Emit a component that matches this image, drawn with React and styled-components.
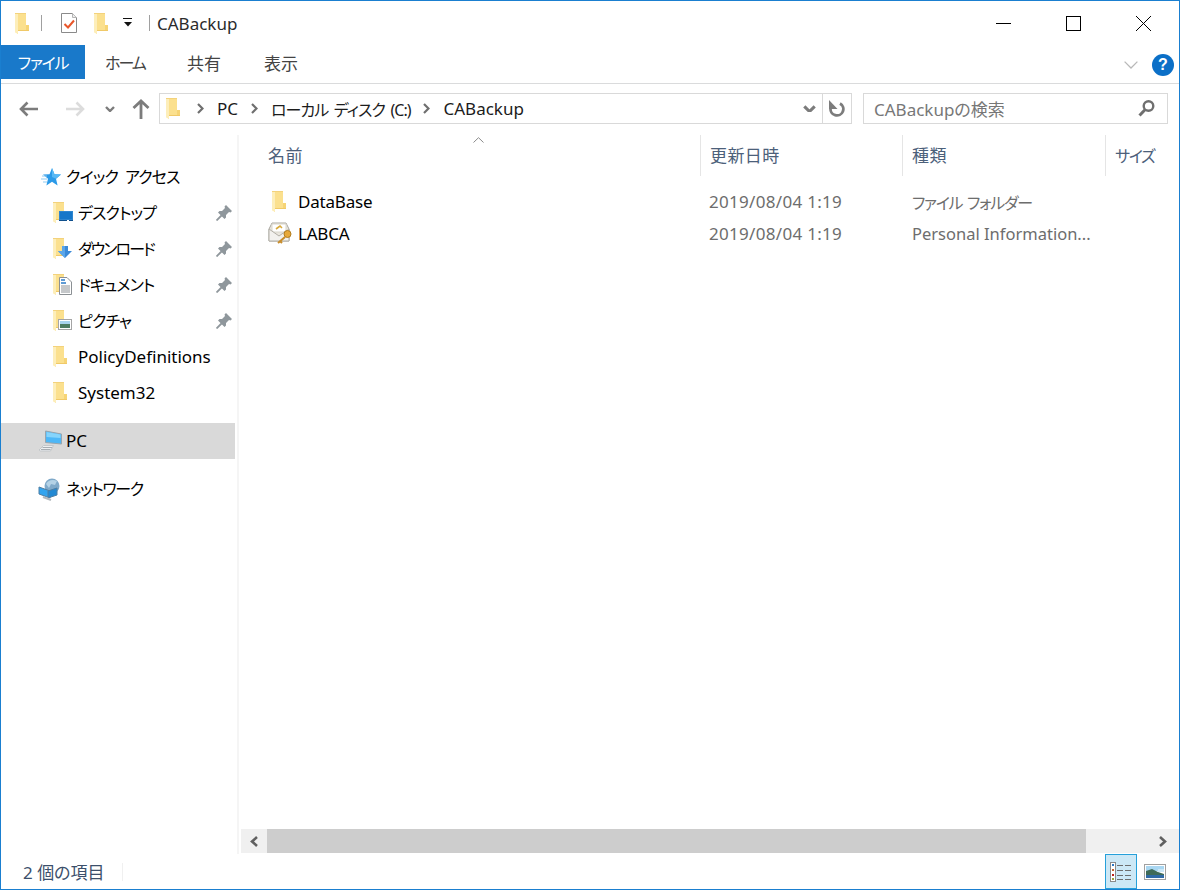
import styled, { createGlobalStyle } from 'styled-components'

const Global = createGlobalStyle`
  html, body { margin: 0; padding: 0; background: #fff; }
  body {
    font-family: "Noto Sans", "Noto Sans CJK JP", sans-serif;
    font-size: 16px;
    font-feature-settings: "palt";
  }
  * { box-sizing: border-box; }
  svg { display: block; flex: none; }
`

const Window = styled.div`
  width: 1180px;
  height: 890px;
  border: 1px solid #1a7fd0;
  display: flex;
  flex-direction: column;
  overflow: hidden;
  background: #fff;
`

const TitleBar = styled.div`
  height: 44px;
  flex: none;
  display: flex;
  align-items: center;
  padding-left: 13px;
`

const Divider = styled.span`
  width: 1px;
  height: 16px;
  background: #a0a0a0;
  margin-left: ${p => p.$left}px;
`

const Slot = styled.span`
  display: block;
  flex: none;
  margin-left: ${p => p.$left}px;
`

const Title = styled.span`
  color: #2b2b2b;
  margin-left: 7px;
  margin-right: auto;
  font-size: 17px;
`

const WinButton = styled.div`
  width: 70px;
  height: 44px;
  display: flex;
  align-items: center;
  justify-content: center;
`

const WinButtons = styled.div`
  display: flex;
  margin-right: 1px;
`

const Ribbon = styled.div`
  height: 39px;
  flex: none;
  display: flex;
  align-items: flex-start;
  border-bottom: 1px solid #dadbdc;
  padding-right: 5px;
`

const Tab = styled.div`
  height: 34px;
  width: ${p => p.$width}px;
  display: flex;
  align-items: center;
  justify-content: center;
  font-size: ${p => p.$size || 16}px;
  letter-spacing: ${p => p.$tight || 0}px;
  color: ${p => (p.$active ? '#fff' : '#444')};
  background: ${p => (p.$active ? '#1979ca' : 'transparent')};
`

const RibbonEnd = styled.div`
  margin-left: auto;
  height: 38px;
  display: flex;
  align-items: center;
  gap: 13px;
  padding-top: 2px;
`

const Help = styled.div`
  width: 22px;
  height: 22px;
  border-radius: 50%;
  background: #0b6fc7;
  color: #fff;
  font: bold 16px/22px "Liberation Sans", sans-serif;
  text-align: center;
`

const AddressRow = styled.div`
  height: 51px;
  flex: none;
  display: flex;
  align-items: flex-start;
  padding-top: 9px;
`

const NavButtons = styled.div`
  width: 158px;
  height: 31px;
  flex: none;
  display: flex;
  align-items: center;
  padding-left: 18px;
`

const Breadcrumb = styled.div`
  width: 693px;
  height: 31px;
  flex: none;
  border: 1px solid #d9d9d9;
  display: flex;
  align-items: center;
  padding-left: 5px;
  color: #1c1c1c;
`

const CrumbText = styled.span`
  margin: 0 13px;
  white-space: nowrap;
  font-size: ${p => p.$size || 17}px;
  letter-spacing: ${p => p.$tight || 0}px;
  word-spacing: ${p => (p.$tight ? 2.5 : 0)}px;
`

const BreadcrumbEnd = styled.div`
  margin-left: auto;
  height: 100%;
  display: flex;
  align-items: center;
`

const RefreshCell = styled.div`
  width: 29px;
  height: 100%;
  margin-left: 6px;
  border-left: 1px solid #d9d9d9;
  display: flex;
  align-items: center;
  justify-content: center;
`

const SearchBox = styled.div`
  width: 305px;
  height: 31px;
  margin-left: 11px;
  flex: none;
  border: 1px solid #d9d9d9;
  display: flex;
  align-items: center;
  justify-content: space-between;
  padding: 0 12px 0 10px;
  color: #777;
  font-size: 17px;
`

const Body = styled.div`
  flex: 1;
  min-height: 0;
  display: flex;
`

const Sidebar = styled.nav`
  width: 238px;
  flex: none;
  padding-top: 24px;
  border-right: 2px solid #f5f5f5;
`

const NavGroup = styled.div`
  margin-bottom: 12px;
`

const NavRow = styled.div`
  width: 234px;
  height: 36px;
  display: flex;
  align-items: center;
  padding-left: ${p => (p.$child ? 51 : 37)}px;
  background: ${p => (p.$selected ? '#d9d9d9' : 'transparent')};
  color: #000;
  white-space: nowrap;
`

const NavLabel = styled.span`
  margin-left: ${p => p.$left}px;
  margin-right: auto;
  font-size: ${p => (p.$latin ? 17 : 16)}px;
  letter-spacing: ${p => (p.$latin ? 0 : p.$tight ?? -0.9)}px;
  word-spacing: 4px;
  padding-bottom: ${p => (p.$latin ? 1 : 2)}px;
`

const Pin = styled.span`
  margin-right: 3px;
`

const Main = styled.main`
  flex: 1;
  min-width: 0;
  margin-left: 2px;
  display: flex;
  flex-direction: column;
`

const Columns = styled.div`
  display: grid;
  grid-template-columns: 459px 202px 203px 1fr;
`

const Header = styled(Columns)`
  position: relative;
  height: 41px;
  flex: none;
`

const HeaderCell = styled.div`
  display: flex;
  align-items: center;
  padding-left: ${p => (p.$first ? 27 : 9)}px;
  padding-bottom: 2px;
  border-left: ${p => (p.$first ? 'none' : '1px solid #e5e5e5')};
  color: #4c607a;
  font-size: ${p => (p.$kana ? 16 : 17)}px;
  letter-spacing: ${p => (p.$kana ? -1.3 : 0.4)}px;
  white-space: nowrap;
  overflow: hidden;
`

const SortCaret = styled.span`
  position: absolute;
  left: 232px;
  top: 2px;
`

const FileList = styled.div`
  flex: 1;
  padding-top: 9px;
`

const FileRow = styled(Columns)`
  height: 32px;
  align-items: center;
`

const NameCell = styled.div`
  display: flex;
  align-items: center;
  padding-left: ${p => p.$inset}px;
  color: #000;
  gap: ${p => p.$gap}px;
  font-size: 17px;
  letter-spacing: -0.2px;
`

const NameText = styled.span`
  padding-top: 1px;
`

const MetaCell = styled.div`
  color: #6d6d6d;
  padding-top: 1px;
  padding-left: ${p => p.$inset}px;
  font-size: ${p => p.$size}px;
  letter-spacing: ${p => p.$spacing}px;
  word-spacing: ${p => (p.$spacing < 0 ? 2 : 0)}px;
  white-space: nowrap;
`

const Scrollbar = styled.div`
  height: 24px;
  flex: none;
  margin-bottom: 1px;
  display: flex;
  align-items: center;
  background: #f0f0f0;
`

const ScrollArrow = styled.div`
  width: ${p => p.$width}px;
  height: 100%;
  flex: none;
  display: flex;
  align-items: center;
  justify-content: center;
`

const ScrollThumb = styled.div`
  width: 819px;
  height: 100%;
  background: #cdcdcd;
  margin-right: auto;
`

const StatusBar = styled.div`
  height: 35px;
  flex: none;
  display: flex;
  align-items: center;
  padding-left: 22px;
  color: #3c4f6b;
  font-size: 17px;
`

const StatusSep = styled.span`
  width: 1px;
  height: 18px;
  background: #f0f0f0;
  margin-left: 17px;
  margin-right: auto;
`

const ViewButton = styled.div`
  width: ${p => p.$width}px;
  height: 35px;
  display: flex;
  align-items: center;
  justify-content: center;
  padding-right: ${p => p.$trail || 0}px;
  background: ${p => (p.$active ? '#cce8f6' : 'transparent')};
  border: 1px solid ${p => (p.$active ? '#26a0da' : 'transparent')};
`

const FolderShape = () => (
  <>
    <path d="M1 0H12V18H4V21L1 19Z" fill="#fbe08e" />
    <path d="M12 12H15V18H12Z" fill="#f6d476" />
    <path d="M4 17H15V18H4Z" fill="#f0c968" />
    <path d="M1 0H4V21L1 19Z" fill="#fdeeba" />
    <path d="M1 0H12V1H1Z" fill="#f3d27c" />
  </>
)

const Folder = () => (
  <svg width="15" height="21" viewBox="0 0 15 21">
    <FolderShape />
  </svg>
)

const OverlayFolder = ({ children }) => (
  <svg width="26" height="22" viewBox="0 0 26 22">
    <FolderShape />
    {children}
  </svg>
)

const Desktop = () => (
  <OverlayFolder>
    <rect x="7" y="9" width="14" height="10" fill="#2f86cf" />
    <rect x="8" y="10" width="12" height="7" fill="#1677c9" />
    <rect x="7" y="18" width="14" height="1" fill="#0f4f8c" />
    <rect x="15" y="18" width="2" height="1" fill="#fff" />
  </OverlayFolder>
)

const Download = () => (
  <OverlayFolder>
    <path d="M10 8H16V13H20L13 20L6 13H10Z" fill="#3b8ad8" />
    <path d="M10 8H13V20L6 13H10Z" fill="#5ba6ea" />
  </OverlayFolder>
)

const Documents = () => (
  <OverlayFolder>
    <path d="M7.5 3.5H15L19.5 8V20.5H7.5Z" fill="#fff" stroke="#8b9094" />
    <path d="M9 6H13M9 9H14" stroke="#2b7bc7" strokeWidth="1.5" />
    <path d="M9 12H18M9 14H18M9 16H18M9 18H18" stroke="#8c9196" />
  </OverlayFolder>
)

const Pictures = () => (
  <OverlayFolder>
    <rect x="6.5" y="9.5" width="13" height="10" fill="#fff" stroke="#a5a5a5" />
    <rect x="8" y="11" width="10" height="3" fill="#a8d4ee" />
    <rect x="8" y="14" width="10" height="4" fill="#4d7c62" />
  </OverlayFolder>
)

const StarIcon = () => (
  <svg width="25" height="20" viewBox="0 0 25 20">
    <path d="M14 1L16.5 7.2L23 7.6L18 11.8L19.6 18.4L14 14.8L8.4 18.4L10 11.8L5 7.6L11.5 7.2Z" fill="#2b9ae8" />
    <path d="M14 1L16.5 7.2L23 7.6L18 11.8L14 10Z" fill="#57b8f5" />
    <path d="M4 9H9M3 12H9M5 15H9" stroke="#8fcbf2" />
  </svg>
)

const PcIcon = () => (
  <svg width="25" height="24" viewBox="0 0 25 24">
    <path d="M7.5 2L23.5 5V15L7.5 13.5Z" fill="#4db7f7" stroke="#98a5ae" />
    <path d="M8.5 3L22.5 5.6V9L8.5 8Z" fill="#86d4fb" />
    <path d="M1 21L5.5 16.5H15.5L12.5 22H2.5Z" fill="#eceef0" stroke="#c3c7ca" />
    <path d="M4.5 18.5H14M3 20.5H12.5" stroke="#a8aeb3" />
  </svg>
)

const NetworkIcon = () => (
  <svg width="23" height="23" viewBox="0 0 23 23">
    <circle cx="14" cy="8" r="7.5" fill="#7fa9c9" />
    <path d="M8 6C10 2 15 1 19 3L17 7L13 6L11 10Z" fill="#b4d2e6" />
    <path d="M1 9L12 13V20L1 16Z" fill="#32a4ef" stroke="#4e7ea3" />
    <path d="M10 13L19 10V17L10 20Z" fill="#2389d3" stroke="#4e7ea3" />
    <path d="M5 19L13 22" stroke="#b3b9be" strokeWidth="2" />
  </svg>
)

const CertIcon = () => (
  <svg width="25" height="24" viewBox="0 0 25 24">
    <path d="M1 8L4 2H18L21 8V20H1Z" fill="#e9e6de" stroke="#a9a69e" />
    <path d="M4 3H18V11H4Z" fill="#fff" stroke="#d9d6cc" />
    <path d="M8 8L12 5L14 7" stroke="#d8a93a" strokeWidth="1.6" fill="none" />
    <path d="M1 8L11 15L21 8V20H1Z" fill="#f2f1ee" stroke="#b3b0a8" />
    <circle cx="19.5" cy="13" r="3.5" fill="#e7a93a" stroke="#b27c1e" />
    <path d="M17 16L10 22M12 20L14 22" stroke="#c88d2b" strokeWidth="2" fill="none" />
  </svg>
)

const PinIcon = () => (
  <svg width="16" height="16" viewBox="0 0 16 16">
    <path d="M10 0L16 6L14.5 7.5L13 7L10 10V12.5L8.5 14L2 7.5L3.5 6H6L9 3L8.5 1.5Z" fill="#8f979c" />
    <path d="M6 10L0.5 15.5" stroke="#8f979c" strokeWidth="1.8" />
  </svg>
)

const CheckDoc = () => (
  <svg width="18" height="22" viewBox="0 0 18 22">
    <path d="M1.5 1.5H12.5L16.5 5.5V20.5H1.5Z" fill="#fff" stroke="#8a8a8a" />
    <path d="M12.5 1.5V5.5H16.5" fill="#eee" stroke="#b5b5b5" />
    <path d="M4.5 12L8 15.5L14 8.5" fill="none" stroke="#e8562a" strokeWidth="2" />
  </svg>
)

const QuickDown = () => (
  <svg width="12" height="10" viewBox="0 0 12 10">
    <path d="M1 0.5H10" stroke="#111" />
    <path d="M2 4H10L6 8.5Z" fill="#111" />
  </svg>
)

const BackArrow = () => (
  <svg width="20" height="16" viewBox="0 0 20 16">
    <path d="M1.5 8H19M8.5 1.5L2 8L8.5 14.5" fill="none" stroke="#7c7c7c" strokeWidth="2.6" />
  </svg>
)

const ForwardArrow = () => (
  <svg width="20" height="16" viewBox="0 0 20 16">
    <path d="M1 8H18.5M11.5 1.5L18 8L11.5 14.5" fill="none" stroke="#dcdcdc" strokeWidth="2.6" />
  </svg>
)

const UpArrow = () => (
  <svg width="18" height="20" viewBox="0 0 18 20">
    <path d="M9 2V20M1.5 9L9 2L16.5 9" fill="none" stroke="#7c7c7c" strokeWidth="2.8" />
  </svg>
)

const Chevron = ({ size = 10, color = '#7c7c7c', weight = 2.4 }) => (
  <svg width={size} height={size * 0.6} viewBox="0 0 10 6">
    <path d="M1 1L5 5L9 1" fill="none" stroke={color} strokeWidth={weight} />
  </svg>
)

const SortUp = () => (
  <svg width="11" height="6" viewBox="0 0 11 6">
    <path d="M0.5 5.5L5.5 0.7L10.5 5.5" fill="none" stroke="#8a8a8a" />
  </svg>
)

const CrumbArrow = () => (
  <svg width="7" height="11" viewBox="0 0 7 11">
    <path d="M1 1L5.5 5.5L1 10" fill="none" stroke="#6f6f6f" strokeWidth="2.2" />
  </svg>
)

const Refresh = () => (
  <svg width="18" height="17" viewBox="0 0 18 17">
    <path d="M12 3.4A6.4 6.4 0 1 1 2.6 8" fill="none" stroke="#7c7c7c" strokeWidth="2.8" />
    <path d="M1 0V9H9.5Z" fill="#7c7c7c" />
  </svg>
)

const SearchIcon = () => (
  <svg width="17" height="17" viewBox="0 0 17 17">
    <circle cx="10.5" cy="6" r="4.8" fill="none" stroke="#6f6f6f" strokeWidth="2.4" />
    <path d="M7 9.8L1.5 15.5" stroke="#6f6f6f" strokeWidth="3" />
  </svg>
)

const Minimize = () => (
  <svg width="15" height="1"><rect width="15" height="1" fill="#000" /></svg>
)

const Maximize = () => (
  <svg width="15" height="15"><rect x="0.5" y="0.5" width="14" height="14" fill="none" stroke="#000" /></svg>
)

const Close = () => (
  <svg width="15" height="15" viewBox="0 0 15 15"><path d="M0 0L15 15M15 0L0 15" stroke="#000" /></svg>
)

const CaretLeft = () => (
  <svg width="9" height="11" viewBox="0 0 9 11">
    <path d="M7 1L2 5.5L7 10" fill="none" stroke="#606060" strokeWidth="2.6" />
  </svg>
)

const CaretRight = () => (
  <svg width="9" height="11" viewBox="0 0 9 11">
    <path d="M2 1L7 5.5L2 10" fill="none" stroke="#606060" strokeWidth="2.6" />
  </svg>
)

const DetailsIcon = () => (
  <svg width="22" height="20" viewBox="0 0 22 20">
    <rect x="0.5" y="0.5" width="5" height="19" fill="#fff" stroke="#8a8a8a" />
    <rect x="2" y="2" width="2" height="2" fill="#2d78c4" />
    <rect x="2" y="7" width="2" height="2" fill="#c2622d" />
    <rect x="2" y="12" width="2" height="2" fill="#c0201c" />
    <rect x="2" y="16" width="2" height="2" fill="#9aa23c" />
    <path d="M7 3.5H13M15 3.5H21M7 8.5H13M15 8.5H21M7 13.5H13M15 13.5H21M7 17.5H13M15 17.5H21" stroke="#6e6e6e" />
  </svg>
)

const PreviewIcon = () => (
  <svg width="22" height="16" viewBox="0 0 22 16">
    <rect x="0.5" y="0.5" width="21" height="15" fill="#fff" stroke="#a0a0a0" />
    <rect x="2" y="2" width="18" height="5" fill="#a9d7f2" />
    <path d="M2 7L8 5L14 8L20 10V12H2Z" fill="#3f6b58" />
    <rect x="2" y="11" width="18" height="3" fill="#2f6aa6" />
    <rect x="14" y="5" width="6" height="3" fill="#cbe7f7" />
  </svg>
)

const quickItems = [
  { label: 'デスクトップ', icon: <Desktop />, pinned: true },
  { label: 'ダウンロード', icon: <Download />, pinned: true, tight: -1.9 },
  { label: 'ドキュメント', icon: <Documents />, pinned: true },
  { label: 'ピクチャ', icon: <Pictures />, pinned: true },
  { label: 'PolicyDefinitions', icon: <OverlayFolder />, latin: true },
  { label: 'System32', icon: <OverlayFolder />, latin: true },
]

const columns = ['名前', '更新日時', '種類', 'サイズ']

export default function App() {
  return (
    <Window>
      <Global />
      <TitleBar>
        <Folder />
        <Divider $left={12} />
        <Slot $left={18}><CheckDoc /></Slot>
        <Slot $left={15}><Folder /></Slot>
        <Slot $left={14}><QuickDown /></Slot>
        <Divider $left={15} />
        <Title>CABackup</Title>
        <WinButtons>
          <WinButton><Minimize /></WinButton>
          <WinButton><Maximize /></WinButton>
          <WinButton><Close /></WinButton>
        </WinButtons>
      </TitleBar>

      <Ribbon>
        <Tab $active $width={84} $tight={-1.2}>ファイル</Tab>
        <Tab $width={80} $tight={-2}>ホーム</Tab>
        <Tab $width={78} $size={17}>共有</Tab>
        <Tab $width={76} $size={17}>表示</Tab>
        <RibbonEnd>
          <Chevron size={16} color="#b8b8b8" weight={0.8} />
          <Help>?</Help>
        </RibbonEnd>
      </Ribbon>

      <AddressRow>
        <NavButtons>
          <BackArrow />
          <Slot $left={26}><ForwardArrow /></Slot>
          <Slot $left={20}><Chevron size={10} /></Slot>
          <Slot $left={17}><UpArrow /></Slot>
        </NavButtons>
        <Breadcrumb>
          <Folder />
          <Slot $left={17}><CrumbArrow /></Slot>
          <CrumbText>PC</CrumbText>
          <CrumbArrow />
          <CrumbText $size={16} $tight={-1}>ローカル ディスク (C:)</CrumbText>
          <CrumbArrow />
          <CrumbText>CABackup</CrumbText>
          <BreadcrumbEnd>
            <Chevron size={13} />
            <RefreshCell><Refresh /></RefreshCell>
          </BreadcrumbEnd>
        </Breadcrumb>
        <SearchBox>
          CABackupの検索
          <SearchIcon />
        </SearchBox>
      </AddressRow>

      <Body>
        <Sidebar>
          <NavGroup>
            <NavRow>
              <StarIcon />
              <NavLabel $left={3}>クイック アクセス</NavLabel>
            </NavRow>
            {quickItems.map(item => (
              <NavRow $child key={item.label}>
                {item.icon}
                <NavLabel $left={0} $latin={item.latin} $tight={item.tight}>{item.label}</NavLabel>
                {item.pinned && <Pin><PinIcon /></Pin>}
              </NavRow>
            ))}
          </NavGroup>
          <NavGroup>
            <NavRow $selected>
              <PcIcon />
              <NavLabel $left={3} $latin>PC</NavLabel>
            </NavRow>
          </NavGroup>
          <NavGroup>
            <NavRow>
              <NetworkIcon />
              <NavLabel $left={5} $tight={-1.3}>ネットワーク</NavLabel>
            </NavRow>
          </NavGroup>
        </Sidebar>

        <Main>
          <Header>
            {columns.map((name, i) => (
              <HeaderCell $first={i === 0} $kana={i === 3} key={name}>{name}</HeaderCell>
            ))}
            <SortCaret><SortUp /></SortCaret>
          </Header>
          <FileList>
            <FileRow>
              <NameCell $inset={30} $gap={12}><Folder /><NameText>DataBase</NameText></NameCell>
              <MetaCell $inset={9} $size={17} $spacing={0.3}>2019/08/04 1:19</MetaCell>
              <MetaCell $inset={10} $size={16} $spacing={-1.3}>ファイル フォルダー</MetaCell>
            </FileRow>
            <FileRow>
              <NameCell $inset={27} $gap={5}><CertIcon /><NameText>LABCA</NameText></NameCell>
              <MetaCell $inset={9} $size={17} $spacing={0.3}>2019/08/04 1:19</MetaCell>
              <MetaCell $inset={10} $size={16.5} $spacing={0}>Personal Information...</MetaCell>
            </FileRow>
          </FileList>
          <Scrollbar>
            <ScrollArrow $width={26}><CaretLeft /></ScrollArrow>
            <ScrollThumb />
            <ScrollArrow $width={34}><CaretRight /></ScrollArrow>
          </Scrollbar>
        </Main>
      </Body>

      <StatusBar>
        2 個の項目
        <StatusSep />
        <ViewButton $active $width={32}><DetailsIcon /></ViewButton>
        <ViewButton $width={42} $trail={6}><PreviewIcon /></ViewButton>
      </StatusBar>
    </Window>
  )
}
